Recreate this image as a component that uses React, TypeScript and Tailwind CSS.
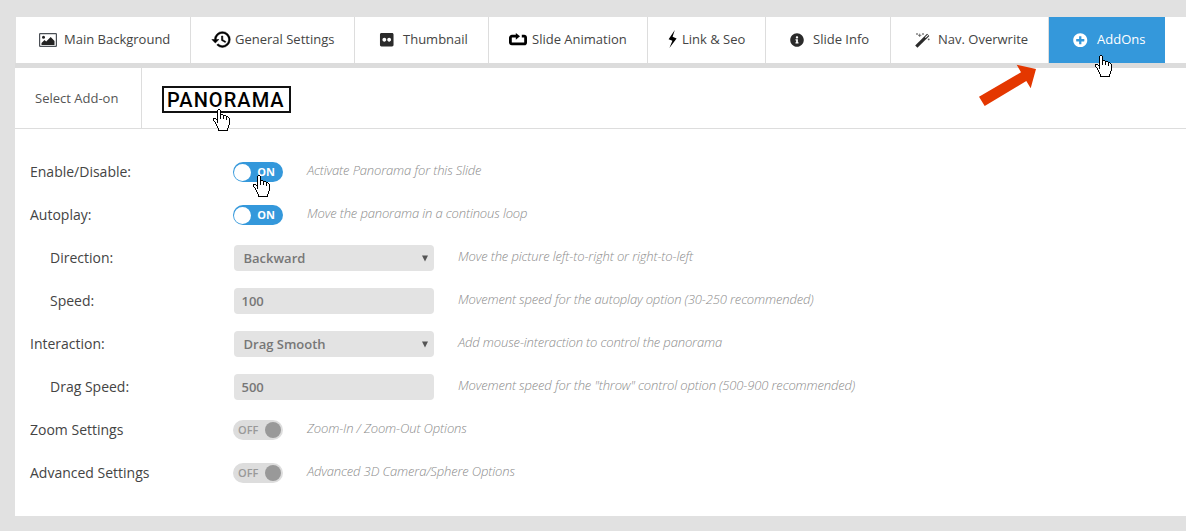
import type { ReactNode } from "react";
import { FaFlickr, FaInfoCircle, FaPlusCircle } from "react-icons/fa";
import { MdHistory } from "react-icons/md";

const HAND = [
  ".....XX..........",
  "....X..X.........",
  "....X..X.........",
  "....X..X.........",
  "....X..X.........",
  "....X..XXX.......",
  "....X..X..XXX....",
  "....X..X..X..XX..",
  "....X..X..X..X.X.",
  "XXX.X..X..X..X..X",
  "X..XX........X..X",
  "X...X...........X",
  ".X..X...........X",
  "..X.X...........X",
  "..X.............X",
  "...X............X",
  "...X...........X.",
  "....X..........X.",
  "....X..........X.",
  ".....X........X..",
  ".....X........X..",
  ".....XXXXXXXXXX..",
];

function HandCursor({ className }: { className: string }) {
  return (
    <svg width="17" height="22" viewBox="0 0 17 22" shapeRendering="crispEdges" className={`pointer-events-none absolute z-10 ${className}`}>
      {HAND.map((row, y) => {
        const first = row.indexOf("X");
        return <rect key={y} x={first} y={y} width={row.lastIndexOf("X") - first + 1} height="1" fill="#fff" />;
      })}
      {HAND.flatMap((row, y) =>
        [...row].map((c, x) => (c === "X" ? <rect key={`${x}-${y}`} x={x} y={y} width="1" height="1" fill="#000" /> : null)),
      )}
    </svg>
  );
}

const PictureIcon = () => (
  <svg width="18" height="14" viewBox="0 0 18 14">
    <rect x="0.6" y="0.6" width="16.8" height="12.8" rx="0.6" fill="#fff" stroke="#4a4f55" strokeWidth="1.2" />
    <circle cx="4.5" cy="4.3" r="1.5" fill="#222" />
    <path d="M2.5 12V10l3-3 1.7 1.6L11.7 4l3.8 4v4z" fill="#222" />
  </svg>
);

const LoopIcon = () => (
  <svg width="18" height="13" viewBox="0 0 18 13">
    <path d="M8 3.2H3a1.6 1.6 0 0 0-1.6 1.6v4.6A1.4 1.4 0 0 0 2.8 10.8h12.4a1.4 1.4 0 0 0 1.4-1.4V4.6a1.4 1.4 0 0 0-1.4-1.4h-2.4" fill="none" stroke="#000" strokeWidth="2.8" />
    <path d="M6.8 0 11 3.3 6.8 6.8z" fill="#000" />
  </svg>
);

const BoltIcon = () => (
  <svg width="9" height="18" viewBox="0 0 9 18">
    <path d="M6.8 0 0.6 9.2l3.8 1.6L1.4 18 8.6 8.5 4.6 6.8z" fill="#000" />
  </svg>
);

const WandIcon = () => (
  <svg width="15" height="15" viewBox="0 0 15 15">
    <path d="M1.3 13.6 13.2 1.8" stroke="#2b2b2b" strokeWidth="3.2" />
    <path d="M10.3 4.7 12.9 2.1" stroke="#fff" strokeWidth="1.1" />
    <path d="M4.7 0.6v3.4M3 2.3h3.4M2 0.2v1.6M1.2 1h1.6M8 0.2v1.6M7.2 1h1.6M13.7 5.5v1.8M12.8 6.4h1.8" stroke="#444" strokeWidth="0.7" />
  </svg>
);

type Tab = { label: string; icon: ReactNode; width: string; iconBox: string; active?: boolean };

const TABS: Tab[] = [
  { label: "Main Background", icon: <PictureIcon />, width: "w-[175px] pl-[23px]", iconBox: "w-[25px]" },
  { label: "General Settings", icon: <MdHistory size={21} color="#000" className="[&>path:last-child]:stroke-[0.6]" strokeWidth={0} stroke="#000" />, width: "w-[164px] pl-[20px]", iconBox: "w-[24px] pb-[2px]" },
  { label: "Thumbnail", icon: <FaFlickr size={15.5} color="#2b2b2b" />, width: "w-[134px] pl-[24px]", iconBox: "w-[24px]" },
  { label: "Slide Animation", icon: <LoopIcon />, width: "w-[159px] pl-[20px]", iconBox: "w-[23px] pb-[2px]" },
  { label: "Link & Seo", icon: <BoltIcon />, width: "w-[118px] pl-[20px]", iconBox: "w-[14px] pb-[2px]" },
  { label: "Slide Info", icon: <FaInfoCircle size={14} color="#2b2b2b" />, width: "w-[125px] pl-[24px]", iconBox: "w-[23px]" },
  { label: "Nav. Overwrite", icon: <WandIcon />, width: "w-[158px] pl-[24px]", iconBox: "w-[23px]" },
  { label: "AddOns", icon: <FaPlusCircle size={14.5} color="#fff" />, width: "w-[116px] pl-[24px]", iconBox: "w-[24px]", active: true },
];

type Row = { label: string; help: string; kind: "on" | "off" | "select" | "input"; value?: string; indent?: boolean; cursor?: boolean };

const ROWS: Row[] = [
  { label: "Enable/Disable:", help: "Activate Panorama for this Slide", kind: "on", cursor: true },
  { label: "Autoplay:", help: "Move the panorama in a continous loop", kind: "on" },
  { label: "Direction:", help: "Move the picture left-to-right or right-to-left", kind: "select", value: "Backward", indent: true },
  { label: "Speed:", help: "Movement speed for the autoplay option (30-250 recommended)", kind: "input", value: "100", indent: true },
  { label: "Interaction:", help: "Add mouse-interaction to control the panorama", kind: "select", value: "Drag Smooth" },
  { label: "Drag Speed:", help: 'Movement speed for the "throw" control option (500-900 recommended)', kind: "input", value: "500", indent: true },
  { label: "Zoom Settings", help: "Zoom-In / Zoom-Out Options", kind: "off" },
  { label: "Advanced Settings", help: "Advanced 3D Camera/Sphere Options", kind: "off" },
];

function Toggle({ on, cursor }: { on: boolean; cursor?: boolean }) {
  return (
    <div
      className={`relative mr-[24px] ml-[3px] flex h-5 w-[50px] items-center justify-between rounded-full text-[11px] leading-5 ${
        on ? "flex-row bg-[#3498db] pr-[8px] pl-px font-bold text-white" : "flex-row-reverse bg-[#dddddd] pr-[2px] pl-[5px] font-semibold text-[#999]"
      }`}
    >
      <span className={on ? "size-[17px] rounded-full bg-white" : "size-4 rounded-full bg-[#999]"} />
      <span>{on ? "ON" : "OFF"}</span>
      {cursor && <HandCursor className="top-[13px] left-[20px]" />}
    </div>
  );
}

function Field({ value, select }: { value?: string; select: boolean }) {
  return (
    <div className={`mr-[24px] ml-1 flex h-[26px] w-[200px] items-center justify-between rounded-[4px] bg-[#e3e3e3] text-[13px] font-semibold text-[#777] ${select ? "pr-[6px] pl-[9.5px]" : "pl-[7.5px]"}`}>
      <span className="pt-px">{value}</span>
      {select && (
        <svg width="6" height="7" viewBox="0 0 6 7">
          <path d="M0 0.5h6L3 6.5z" fill="#555" />
        </svg>
      )}
    </div>
  );
}

export default function App() {
  return (
    <div className="relative h-[531px] w-[1186px] overflow-hidden bg-[#e1e1e1] pt-[17px] pl-[15px] font-['Open_Sans',sans-serif] whitespace-nowrap">
      <nav className="ml-px flex h-[46px] bg-white">
        {TABS.map((t) => (
          <div
            key={t.label}
            className={`relative flex shrink-0 items-center text-[13px] ${t.width} ${t.active ? "bg-[#3498db] text-white" : "border-r border-[#ddd] text-[#444]"}`}
          >
            <span className={`shrink-0 ${t.iconBox}`}>{t.icon}</span>
            <span className="pb-px">{t.label}</span>
            {t.active && <HandCursor className="top-[38px] left-[46px]" />}
          </div>
        ))}
      </nav>
      <div className="h-[5px] bg-[#dcdcdc]" />
      <main className="h-[448px] bg-white">
        <div className="flex h-[61px] border-b border-[#ddd]">
          <div className="flex w-[127px] items-center border-r border-[#ddd] pt-[2px] pl-[20px] text-[13px] text-[#555]">Select Add-on</div>
          <div className="flex items-center pl-[20px]">
            <div className="relative mt-[3px] flex h-[27px] w-[129px] items-center border-2 border-[#111] pl-[3px] font-[Roboto,sans-serif] text-[20px] leading-none font-medium tracking-[1.05px] text-black">
              <span>PANORAMA</span>
              <HandCursor className="top-[21px] left-[49px]" />
            </div>
          </div>
        </div>
        <div className="pt-[21.5px] pl-[15px]">
          {ROWS.map((r) => (
            <div key={r.label} className="flex h-[43px] items-center">
              <div className={`w-[200px] pb-[2px] text-[14px] text-[#444] ${r.indent ? "pl-[20px]" : ""}`}>{r.label}</div>
              {r.kind === "on" || r.kind === "off" ? <Toggle on={r.kind === "on"} cursor={r.cursor} /> : <Field value={r.value} select={r.kind === "select"} />}
              <div className="pb-[3px] text-[13px] font-light tracking-[-0.14px] text-[#8c8c8c] italic">{r.help}</div>
            </div>
          ))}
        </div>
      </main>
      <svg width="58" height="43" viewBox="979 64 58 43" className="absolute top-[64px] left-[979px]">
        <path d="M979 96.7 1021 72.3 1016.7 64.7 1036 69 1030.7 88.3 1026.3 81 984.7 106z" fill="#e43700" />
      </svg>
    </div>
  );
}
